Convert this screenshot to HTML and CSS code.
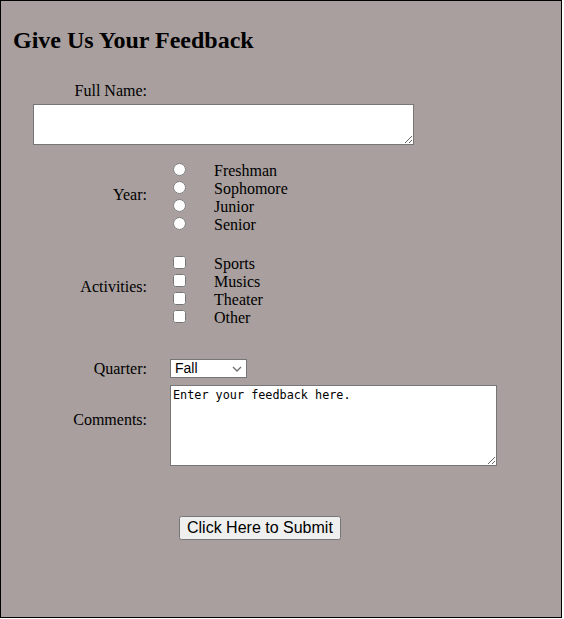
FILE: index.html
```html
<!DOCTYPE html>
<html>
<head>
<meta charset="utf-8">
<title>Feedback</title>
<link rel="stylesheet" href="styles.css">
</head>
<body>
<div class="page">
  <h2 class="title">Give Us Your Feedback</h2>
  <form class="form">
    <label class="lbl lbl-name">Full Name:</label>
    <textarea class="name-box"></textarea>

    <span class="lbl lbl-year">Year:</span>
    <div class="choices radios">
      <label class="opt"><input type="radio" name="year"><span>Freshman</span></label>
      <label class="opt"><input type="radio" name="year"><span>Sophomore</span></label>
      <label class="opt"><input type="radio" name="year"><span>Junior</span></label>
      <label class="opt"><input type="radio" name="year"><span>Senior</span></label>
    </div>

    <span class="lbl lbl-act">Activities:</span>
    <div class="choices checks">
      <label class="opt"><input type="checkbox"><span>Sports</span></label>
      <label class="opt"><input type="checkbox"><span>Musics</span></label>
      <label class="opt"><input type="checkbox"><span>Theater</span></label>
      <label class="opt"><input type="checkbox"><span>Other</span></label>
    </div>

    <span class="lbl lbl-quarter">Quarter:</span>
    <div class="quarter-cell">
      <div class="select-wrap">
        <select class="quarter">
          <option>Fall</option>
          <option>Winter</option>
          <option>Spring</option>
          <option>Summer</option>
        </select>
        <svg class="chev" width="10" height="6" viewBox="0 0 10 6"><path d="M1 1 L5 5 L9 1" fill="none" stroke="#6d6d6d" stroke-width="1.3"/></svg>
      </div>
    </div>

    <span class="lbl lbl-comments">Comments:</span>
    <textarea class="comments">Enter your feedback here.</textarea>

    <span class="spacer"></span>
    <div class="submit-cell">
      <button type="button" class="submit">Click Here to Submit</button>
    </div>
  </form>
</div>
</body>
</html>
```

FILE: styles.css
```css
html {
  background: #ffffff;
}

body {
  margin: 0;
  font-family: "Liberation Serif", "Times New Roman", serif;
  font-size: 16px;
  color: #000;
}

.page {
  box-sizing: border-box;
  width: 562px;
  height: 618px;
  border: 1px solid #000;
  background: #a89f9e;
  overflow: hidden;
}

.title {
  margin: 25px 0 0 12px;
  font-size: 24px;
  line-height: 28px;
  font-weight: bold;
}

.form {
  display: grid;
  grid-template-columns: 146px 1fr;
  column-gap: 23px;
  line-height: 18px;
}

.lbl {
  grid-column: 1;
  text-align: right;
  align-self: center;
}

.lbl-name {
  margin-top: 28px;
}

.name-box {
  grid-column: 1 / span 2;
  margin: 4px 0 0 32px;
  box-sizing: border-box;
  width: 381px;
  height: 41px;
  border: 1px solid #767676;
  padding: 2px;
  background: #fff;
}

.choices {
  grid-column: 2;
  padding-left: 3px;
}

.radios,
.lbl-year {
  margin-top: 15px;
}

.lbl-year {
  position: relative;
  top: -1px;
}

.checks,
.lbl-act {
  margin-top: 21px;
}

.lbl-act {
  position: relative;
  top: -2px;
}

.opt {
  display: flex;
  align-items: center;
  height: 18px;
}

.opt input {
  width: 13px;
  height: 13px;
  margin: 0 28px 0 0;
  flex: none;
}

.opt span {
  position: relative;
  top: 2px;
}

.quarter-cell,
.lbl-quarter {
  margin-top: 34px;
}

.quarter-cell {
  grid-column: 2;
  display: flex;
}

.select-wrap {
  position: relative;
  width: 77px;
  height: 19px;
}

.quarter {
  appearance: none;
  -webkit-appearance: none;
  box-sizing: border-box;
  width: 77px;
  height: 19px;
  font-family: "Liberation Sans", Arial, sans-serif;
  font-size: 14px;
  line-height: 17px;
  padding: 0 0 0 4px;
  border: 1px solid #767676;
  border-radius: 0;
  background: #fff;
  color: #000;
  margin: 0;
}

.chev {
  position: absolute;
  right: 5px;
  top: 7px;
  pointer-events: none;
}

.lbl-comments {
  align-self: start;
  margin-top: 33px;
}

.comments {
  grid-column: 2;
  margin: 7px 0 0 0;
  box-sizing: border-box;
  width: 327px;
  height: 81px;
  border: 1px solid #767676;
  padding: 2px;
  background: #fff;
  font-family: "DejaVu Sans Mono", "Liberation Mono", monospace;
  font-size: 11.8px;
  line-height: 15px;
  color: #000;
}

.spacer {
  grid-column: 1;
}

.submit-cell {
  grid-column: 2;
  margin-top: 50px;
  padding-left: 9px;
  display: flex;
}

.submit {
  font-family: "Liberation Sans", Arial, sans-serif;
  font-size: 16px;
  height: 24px;
  padding: 1px 6px;
  margin: 0;
  color: #000;
}
```
